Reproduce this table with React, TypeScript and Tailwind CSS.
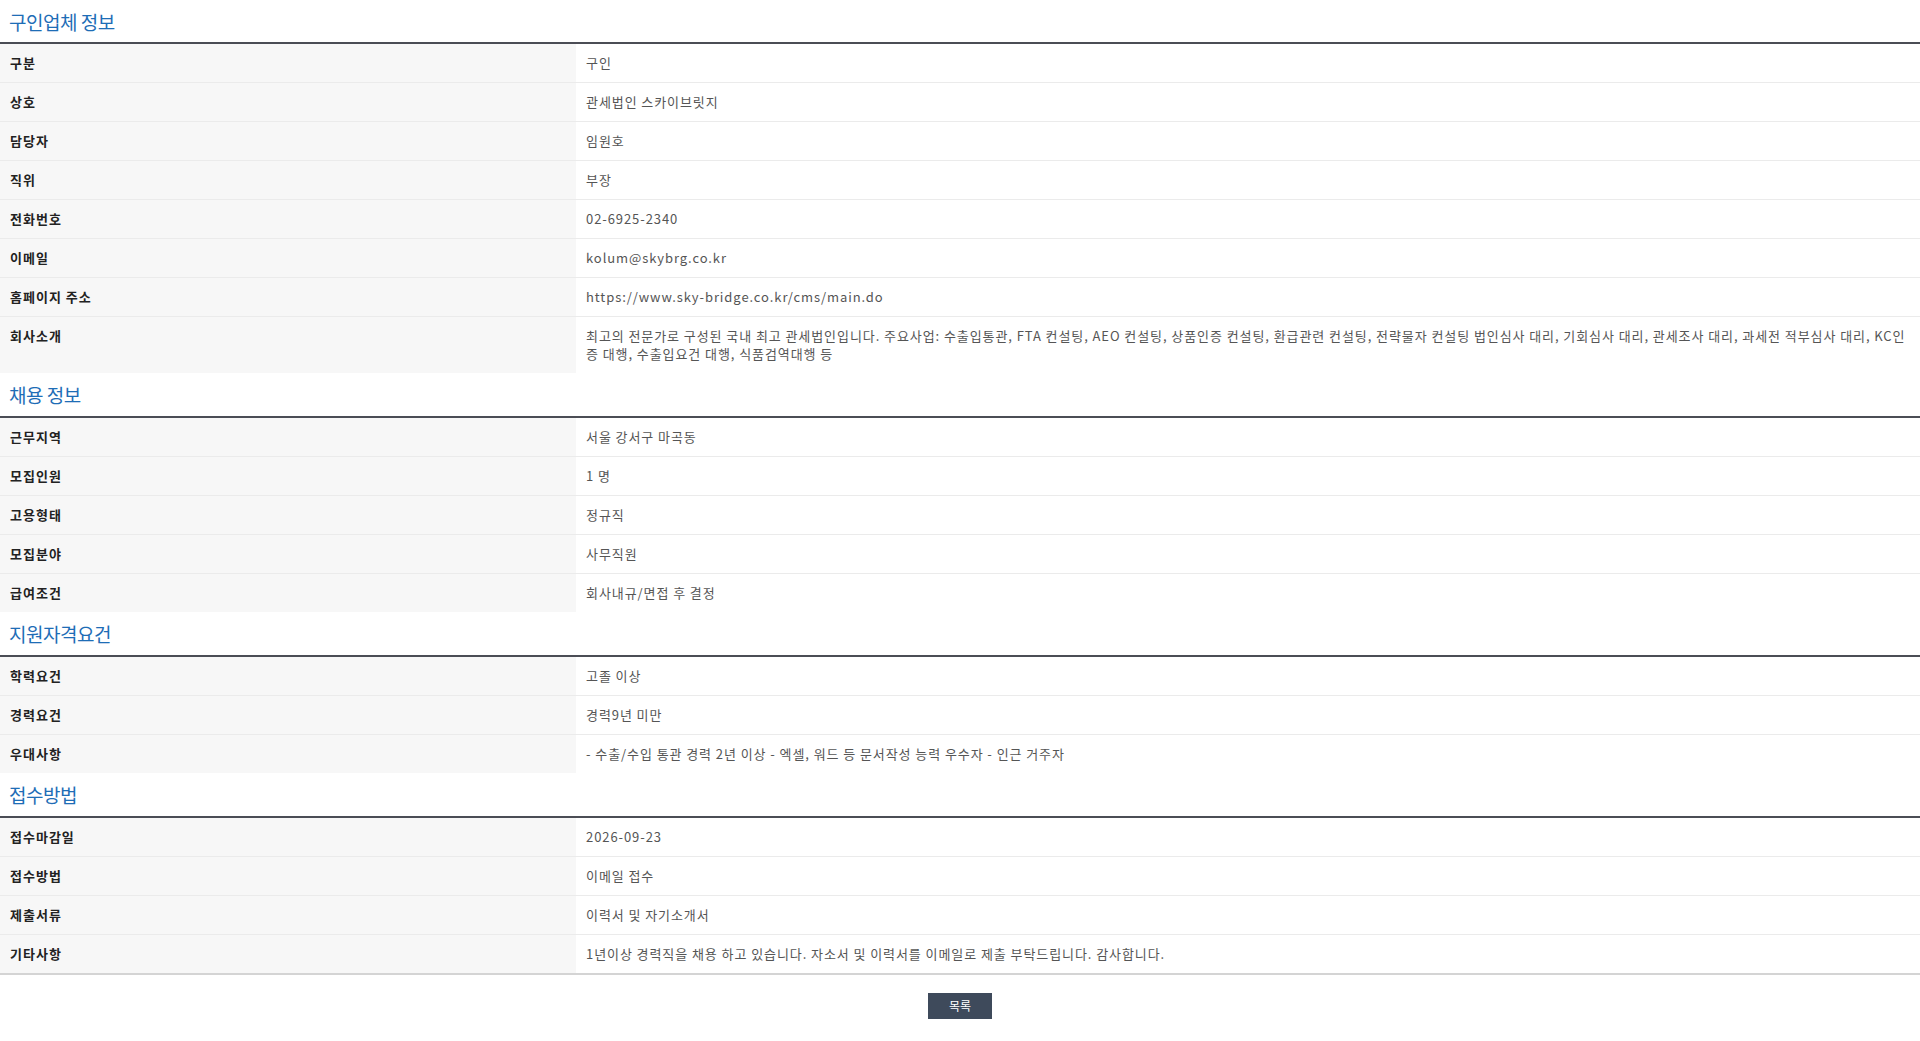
type Row = { label: string; value: string };

const sections: { title: string; rows: Row[] }[] = [
  {
    title: "구인업체 정보",
    rows: [
      { label: "구분", value: "구인" },
      { label: "상호", value: "관세법인 스카이브릿지" },
      { label: "담당자", value: "임원호" },
      { label: "직위", value: "부장" },
      { label: "전화번호", value: "02-6925-2340" },
      { label: "이메일", value: "kolum@skybrg.co.kr" },
      { label: "홈페이지 주소", value: "https://www.sky-bridge.co.kr/cms/main.do" },
      {
        label: "회사소개",
        value:
          "최고의 전문가로 구성된 국내 최고 관세법인입니다. 주요사업: 수출입통관, FTA 컨설팅, AEO 컨설팅, 상품인증 컨설팅, 환급관련 컨설팅, 전략물자 컨설팅 법인심사 대리, 기회심사 대리, 관세조사 대리, 과세전 적부심사 대리, KC인증 대행, 수출입요건 대행, 식품검역대행 등",
      },
    ],
  },
  {
    title: "채용 정보",
    rows: [
      { label: "근무지역", value: "서울 강서구 마곡동" },
      { label: "모집인원", value: "1 명" },
      { label: "고용형태", value: "정규직" },
      { label: "모집분야", value: "사무직원" },
      { label: "급여조건", value: "회사내규/면접 후 결정" },
    ],
  },
  {
    title: "지원자격요건",
    rows: [
      { label: "학력요건", value: "고졸 이상" },
      { label: "경력요건", value: "경력9년 미만" },
      { label: "우대사항", value: "- 수출/수입 통관 경력 2년 이상 - 엑셀, 워드 등 문서작성 능력 우수자 - 인근 거주자" },
    ],
  },
  {
    title: "접수방법",
    rows: [
      { label: "접수마감일", value: "2026-09-23" },
      { label: "접수방법", value: "이메일 접수" },
      { label: "제출서류", value: "이력서 및 자기소개서" },
      { label: "기타사항", value: "1년이상 경력직을 채용 하고 있습니다. 자소서 및 이력서를 이메일로 제출 부탁드립니다. 감사합니다." },
    ],
  },
];

export default function App() {
  return (
    <div className="min-h-[1041px] bg-white font-['Noto_Sans_CJK_KR','Noto_Sans',sans-serif]">
      {sections.map((section, si) => (
        <section key={section.title}>
          <h3
            className={
              "flex items-center px-[9px] text-[19px] leading-none text-[#1e6db6] tracking-[-0.5px]" +
              (si === 0 ? " h-[42px]" : " h-[43px]")
            }
          >
            {section.title}
          </h3>
          <div
            className={
              "border-t-2 border-[#4b4d55]" +
              (si === sections.length - 1 ? " border-b-2 border-b-[#d4d4d4]" : "")
            }
          >
            {section.rows.map((row, ri) => (
              <div
                key={row.label}
                className={
                  "grid grid-cols-[576px_1fr] text-[13px] leading-[18px]" +
                  (ri < section.rows.length - 1 ? " border-b border-[#ebebeb]" : "")
                }
              >
                <div className="bg-[#f7f7f7] px-[10px] py-[10px] font-bold text-[#222] tracking-[1px]">{row.label}</div>
                <div className="px-[10px] py-[10px] text-[#555] tracking-[0.92px] break-all">{row.value}</div>
              </div>
            ))}
          </div>
        </section>
      ))}
      <div className="flex justify-center pt-[18px]">
        <button className="w-[64px] h-[26px] bg-[#3e4a5b] text-white text-[12px] leading-none">목록</button>
      </div>
    </div>
  );
}
